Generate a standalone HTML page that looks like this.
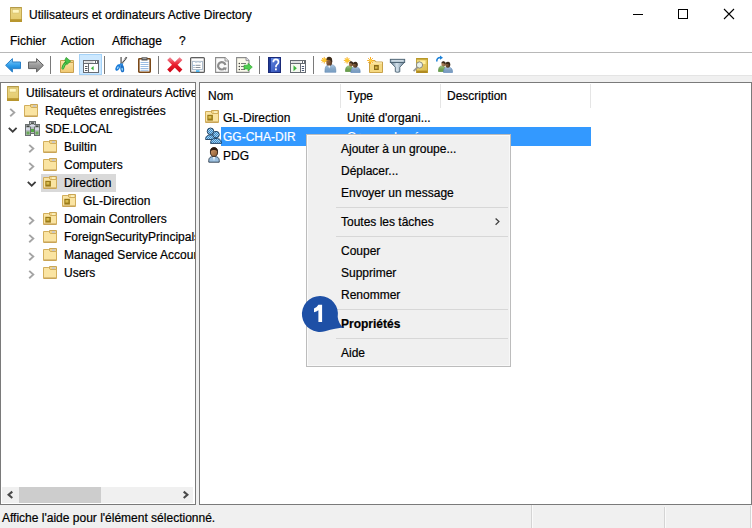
<!DOCTYPE html>
<html><head><meta charset="utf-8">
<style>
*{margin:0;padding:0;box-sizing:border-box}
html,body{width:752px;height:528px;overflow:hidden;background:#f0f0f0;font-family:"Liberation Sans",sans-serif;font-size:12px;color:#000;-webkit-text-stroke:0.2px currentColor}
.a{position:absolute}
.t{position:absolute;line-height:12px;white-space:nowrap}
svg{position:absolute;overflow:visible}
#title{left:0;top:0;width:752px;height:30px;background:#fff}
#menubar{left:0;top:30px;width:752px;height:22px;background:#fff}
#mline{left:0;top:52px;width:752px;height:1px;background:#b8b8b8}
#toolbar{left:0;top:53px;width:752px;height:22px;background:#fff;border-bottom:0}
.clip{position:absolute;overflow:hidden}
.row{position:absolute;height:18px;line-height:18px;white-space:nowrap}
.sep{position:absolute;width:1px;background:#a0a0a0}
.mi{position:absolute;line-height:22px;height:22px;white-space:nowrap}
</style></head><body>
<div id="title" class="a">
  <svg style="left:10px;top:7px" width="12" height="15" viewBox="0 0 12 15">
    <defs><linearGradient id="gb" x1="0" y1="0" x2="0" y2="1"><stop offset="0" stop-color="#ecd98a"/><stop offset="1" stop-color="#e3c96a"/></linearGradient></defs>
    <rect x="0" y="0" width="12" height="15" fill="url(#gb)"/>
    <rect x="0" y="0" width="12" height="1.3" fill="#b39a4a"/>
    <rect x="0" y="0" width="1" height="15" fill="#c4a850"/><rect x="11" y="0" width="1" height="15" fill="#c4a850"/>
    <rect x="2.3" y="2.7" width="6.8" height="3.3" fill="#fff6c0" stroke="#d0b860" stroke-width="0.5"/>
    <rect x="0" y="12.2" width="12" height="2.8" fill="#b8962e"/>
  </svg>
  <div class="t" style="left:29px;top:9px">Utilisateurs et ordinateurs Active Directory</div>
  <div class="a" style="left:633px;top:14px;width:10px;height:1px;background:#000"></div>
  <div class="a" style="left:678px;top:9px;width:10px;height:10px;border:1px solid #000"></div>
  <svg style="left:724px;top:9px" width="10" height="10" viewBox="0 0 10 10"><path d="M0 0L10 10M10 0L0 10" stroke="#000" stroke-width="1.1"/></svg>
</div>
<div id="menubar" class="a">
  <div class="t" style="left:10px;top:5px">Fichier</div>
  <div class="t" style="left:61px;top:5px">Action</div>
  <div class="t" style="left:112px;top:5px">Affichage</div>
  <div class="t" style="left:179px;top:5px">?</div>
</div>
<div id="mline" class="a"></div>

<div id="toolbar" class="a"></div>
<svg style="left:5px;top:58px" width="16" height="15" viewBox="0 0 16 15">
  <defs><linearGradient id="gbl" x1="0" y1="0" x2="0" y2="1"><stop offset="0" stop-color="#8ad4ff"/><stop offset="0.55" stop-color="#2a9ae8"/><stop offset="1" stop-color="#1070c0"/></linearGradient></defs>
  <path d="M0.6 7.3L7.4 0.6V4H15.5V10.6H7.4V14Z" fill="url(#gbl)" stroke="#2a80c8" stroke-width="1" stroke-linejoin="round"/>
</svg>
<svg style="left:28px;top:58px" width="16" height="15" viewBox="0 0 16 15">
  <defs><linearGradient id="ggr" x1="0" y1="0" x2="0" y2="1"><stop offset="0" stop-color="#d0d0d0"/><stop offset="0.5" stop-color="#9a9a9a"/><stop offset="1" stop-color="#808080"/></linearGradient></defs>
  <path d="M15.4 7.3L8.6 0.6V4H0.5V10.6H8.6V14Z" fill="url(#ggr)" stroke="#5e5e5e" stroke-width="1" stroke-linejoin="round"/>
</svg>
<div class="sep" style="left:50px;top:56px;height:18px;background:#7a7a7a"></div>
<svg style="left:60px;top:57px" width="15" height="16" viewBox="0 0 15 16">
  <defs><linearGradient id="gfd" x1="0" y1="0" x2="0" y2="1"><stop offset="0" stop-color="#fbe6a8"/><stop offset="1" stop-color="#f0c870"/></linearGradient></defs>
  <path d="M7.5 3.5H13.5V6H7.5Z" fill="#f2d488" stroke="#caa656"/>
  <path d="M0.5 3.5H5.5L7 5.5H13.5V15.5H0.5Z" fill="url(#gfd)" stroke="#c9a050"/>
  <path d="M2.8 11.3C3.3 8.5 4.8 6.5 6.8 5.2" fill="none" stroke="#2a9a2a" stroke-width="2.6" stroke-linecap="round"/>
  <path d="M2.8 11.3C3.3 8.5 4.8 6.5 6.8 5.2" fill="none" stroke="#5ad05a" stroke-width="1.2" stroke-linecap="round"/>
  <path d="M4.8 3.2L6.2 0.4L10.6 4.2L6.8 7.6Z" fill="#48c048" stroke="#2a9a2a" stroke-width="0.7"/>
</svg>
<div class="a" style="left:79px;top:54px;width:23px;height:21px;background:#cce8ff;border:1px solid #a4d2f8"></div>
<svg style="left:83px;top:60px" width="16" height="13" viewBox="0 0 16 13">
  <rect x="0.5" y="0.5" width="15" height="12" fill="#fff" stroke="#666b72"/>
  <path d="M1 3.5h14" stroke="#666b72"/>
  <path d="M1.5 2h9" stroke="#b8bcc0"/>
  <rect x="12" y="1" width="1" height="2" fill="#666b72"/><rect x="14" y="1" width="1" height="2" fill="#666b72"/>
  <path d="M2 6.5h2.5M2 8.5h2.5M2 10.5h2.5" stroke="#555a60"/>
  <path d="M5.5 4v8.5" stroke="#666b72"/>
  <path d="M10.6 6v4.6L7.9 8.3z" fill="#3cb43c"/>
</svg>
<div class="sep" style="left:104px;top:56px;height:18px;background:#7a7a7a"></div>
<svg style="left:112px;top:54px" width="20" height="22" viewBox="0 0 20 22">
  <path d="M9.1 3L9.1 10" stroke="#7a7a7a" stroke-width="1.6"/>
  <path d="M14.6 3.3L10 9.6" stroke="#3a3a3a" stroke-width="1.7" stroke-dasharray="1.1 0.5"/>
  <ellipse cx="5.8" cy="13.5" rx="1.9" ry="3.6" transform="rotate(28 5.8 13.5)" fill="#1a7ad8"/>
  <ellipse cx="5.8" cy="13.7" rx="0.7" ry="1.5" transform="rotate(28 5.8 13.7)" fill="#9ad8ff"/>
  <ellipse cx="10.2" cy="14.4" rx="1.9" ry="3.9" transform="rotate(-8 10.2 14.4)" fill="#1a70c8"/>
  <ellipse cx="10.2" cy="15.2" rx="0.7" ry="1.5" transform="rotate(-8 10.2 15.2)" fill="#a0e0ff"/>
  <path d="M9.3 9.5L7.5 11.5M10.2 9.5L10.2 11.5" stroke="#2a88e0" stroke-width="1.6"/>
</svg>
<svg style="left:138px;top:57px" width="13" height="16" viewBox="0 0 13 16">
  <rect x="0.8" y="1.8" width="11.4" height="13.4" rx="0.6" fill="#fff" stroke="#7a4818" stroke-width="1.6"/>
  <path d="M2.5 5.5h8M2.5 7.5h8M2.5 9.5h8M2.5 11.5h8M2.5 13.3h8" stroke="#8fb4e0" stroke-width="0.9"/>
  <rect x="3.5" y="0.3" width="6" height="3.2" fill="#505050"/>
  <rect x="4.5" y="1" width="4" height="1.2" fill="#a0a0a0"/>
</svg>
<div class="sep" style="left:158px;top:56px;height:18px;background:#7a7a7a"></div>
<svg style="left:167px;top:57px" width="16" height="16" viewBox="0 0 16 16">
  <defs><linearGradient id="grd" x1="0" y1="0" x2="0" y2="1"><stop offset="0" stop-color="#f07a88"/><stop offset="0.45" stop-color="#ec2030"/><stop offset="1" stop-color="#d00818"/></linearGradient></defs>
  <path d="M1.6 1.6L14 14M14 1.6L1.6 14" stroke="url(#grd)" stroke-width="4" stroke-linecap="butt"/>
</svg>
<svg style="left:190px;top:57px" width="15" height="16" viewBox="0 0 15 16">
  <rect x="0.6" y="0.6" width="13.8" height="14.8" rx="1" fill="#f2f2f2" stroke="#5e5e5e" stroke-width="1.2"/>
  <rect x="2" y="2" width="11" height="1.2" fill="#fff"/>
  <rect x="2.5" y="4.5" width="10" height="8" fill="#fff" stroke="#a8b8c8" stroke-width="0.9"/>
  <rect x="5" y="4.5" width="2.5" height="1.5" fill="#c8d4e0"/><rect x="8.5" y="4.5" width="2.5" height="1.5" fill="#c8d4e0"/>
  <circle cx="4" cy="8.3" r="0.6" fill="#2a6ab0"/><circle cx="4" cy="10.5" r="0.6" fill="#6a7a8a"/>
  <path d="M5.5 8.3h5M5.5 10.5h5" stroke="#7a8490" stroke-width="0.9"/>
  <rect x="6" y="13.3" width="3.5" height="1.6" fill="#3ab0f0"/>
</svg>
<svg style="left:215px;top:57px" width="14" height="16" viewBox="0 0 14 16">
  <path d="M0.6 0.6h9.4l3.4 3.4v11.4h-12.8z" fill="#fafafa" stroke="#8a8a8a" stroke-width="1.1"/>
  <path d="M10 0.6v3.4h3.4" fill="#e8e8e8" stroke="#8a8a8a" stroke-width="0.9"/>
  <path d="M9.6 11.2A3.7 3.7 0 1 1 10.4 8" fill="none" stroke="#8c8c8c" stroke-width="2.2"/>
  <path d="M8.2 10.2l3.6 0.2l-1 3.4z" fill="#8c8c8c"/>
</svg>
<svg style="left:236px;top:57px" width="17" height="16" viewBox="0 0 17 16">
  <path d="M0.6 0.6h9.4l3 3v11.8h-12.4z" fill="#fbfaec" stroke="#8a8a8a" stroke-width="1.1"/>
  <path d="M10 0.6v3h3" fill="#e0e0f0" stroke="#8a8a8a" stroke-width="0.9"/>
  <circle cx="3.3" cy="6.5" r="0.7" fill="#333"/><circle cx="3.3" cy="9.5" r="0.7" fill="#333"/><circle cx="3.3" cy="12.5" r="0.7" fill="#333"/>
  <path d="M5 6.5h5M5 9.5h4M5 12.5h4" stroke="#6a6a6a" stroke-width="0.9"/>
  <path d="M8 8.2h4V6.3l4.3 3.8l-4.3 3.8v-1.9H8z" fill="#50d050" stroke="#2aa02a" stroke-width="0.6"/>
</svg>
<div class="sep" style="left:259px;top:56px;height:18px;background:#7a7a7a"></div>
<svg style="left:268px;top:57px" width="13" height="16" viewBox="0 0 13 16">
  <defs><linearGradient id="ghp" x1="0" y1="0" x2="1" y2="1"><stop offset="0" stop-color="#6a90e8"/><stop offset="1" stop-color="#2a48b0"/></linearGradient></defs>
  <rect x="0.5" y="0.5" width="12" height="15" fill="url(#ghp)" stroke="#1a2a78"/>
  <rect x="1" y="1" width="2" height="14" fill="#1e3a98"/>
  <path d="M5.3 5.2Q5.3 2.4 7.9 2.4Q10.5 2.4 10.5 5Q10.5 6.6 8.9 7.6Q7.9 8.3 7.9 10.2" fill="none" stroke="#fff" stroke-width="1.7"/>
  <rect x="7" y="11.4" width="1.8" height="1.9" fill="#fff"/>
</svg>
<svg style="left:290px;top:60px" width="16" height="13" viewBox="0 0 16 13">
  <rect x="0.5" y="0.5" width="15" height="12" fill="#fff" stroke="#666b72"/>
  <path d="M1 3.5h14" stroke="#666b72"/>
  <path d="M1.5 2h9" stroke="#b8bcc0"/>
  <rect x="12" y="1" width="1" height="2" fill="#666b72"/><rect x="14" y="1" width="1" height="2" fill="#666b72"/>
  <rect x="1" y="4" width="9.5" height="8" fill="#f4f8f0"/>
  <path d="M11.8 6.5h2.3M11.8 8.5h2.3M11.8 10.5h2.3" stroke="#4a5a78"/>
  <path d="M10.5 4v8.5" stroke="#666b72"/>
  <path d="M3.5 5.2v6L6.8 8.2z" fill="#3cb43c"/>
</svg>
<div class="sep" style="left:313px;top:56px;height:18px;background:#7a7a7a"></div>
<svg style="left:318px;top:54px" width="22" height="22" viewBox="0 0 22 22">
<defs><linearGradient id="sku1" x1="0" y1="0" x2="1" y2="1"><stop offset="0" stop-color="#b88050"/><stop offset="1" stop-color="#4a3020"/></linearGradient><linearGradient id="bdu1" x1="0" y1="0" x2="0" y2="1"><stop offset="0" stop-color="#ffffff" stop-opacity="0.35"/><stop offset="1" stop-color="#000" stop-opacity="0.08"/></linearGradient></defs>
<path d="M6.9 18.3C6.9 11.8 8.4 10.8 12.399999999999999 10.8S17.9 11.8 17.9 18.3Z" fill="#8ab4dc" stroke="#6a90b8" stroke-width="0.6"/>
<path d="M6.9 18.3C6.9 11.8 8.4 10.8 12.399999999999999 10.8S17.9 11.8 17.9 18.3Z" fill="url(#bdu1)"/>
<ellipse cx="11.2" cy="7.5" rx="3" ry="4.6" fill="url(#sku1)"/>
<path d="M8.2 7.0A3 4.6 0 0 1 14.2 7.5L13.899999999999999 9.0C13.2 6.5 11.2 4.7 8.399999999999999 6.7Z" fill="#3a2a1a"/>
<path d="M10.2 11.5h2l-1 3z" fill="#fff"/>
<g stroke="#f4a818" stroke-width="0.9"><path d="M6.25 2.95v6.6M2.95 6.25h6.6M3.95 3.95l4.6 4.6M8.55 3.95l-4.6 4.6"/></g><circle cx="6.25" cy="6.25" r="2" fill="#ffc830"/>
</svg>
<svg style="left:343px;top:54px" width="20" height="22" viewBox="0 0 20 22">
<defs><linearGradient id="skg1" x1="0" y1="0" x2="1" y2="1"><stop offset="0" stop-color="#c09060"/><stop offset="1" stop-color="#6a4a28"/></linearGradient><linearGradient id="bdg1" x1="0" y1="0" x2="0" y2="1"><stop offset="0" stop-color="#ffffff" stop-opacity="0.35"/><stop offset="1" stop-color="#000" stop-opacity="0.08"/></linearGradient></defs>
<path d="M2.5 17.5C2.5 13 4.0 12 6.25 12S10 13 10 17.5Z" fill="#74b050" stroke="#4a8a30" stroke-width="0.6"/>
<path d="M2.5 17.5C2.5 13 4.0 12 6.25 12S10 13 10 17.5Z" fill="url(#bdg1)"/>
<ellipse cx="8" cy="10" rx="2.2" ry="2.6" fill="url(#skg1)"/>
<path d="M5.8 9.5A2.2 2.6 0 0 1 10.2 10L9.899999999999999 11.5C9.2 9 8 9.200000000000001 6.0 9.2Z" fill="#3a2a1a"/>
<defs><linearGradient id="skg2" x1="0" y1="0" x2="1" y2="1"><stop offset="0" stop-color="#a07048"/><stop offset="1" stop-color="#3a2818"/></linearGradient><linearGradient id="bdg2" x1="0" y1="0" x2="0" y2="1"><stop offset="0" stop-color="#ffffff" stop-opacity="0.35"/><stop offset="1" stop-color="#000" stop-opacity="0.08"/></linearGradient></defs>
<path d="M7.8 18.5C7.8 14.3 9.3 13.3 12.5 13.3S17.2 14.3 17.2 18.5Z" fill="#86aed8" stroke="#5a86b8" stroke-width="0.6"/>
<path d="M7.8 18.5C7.8 14.3 9.3 13.3 12.5 13.3S17.2 14.3 17.2 18.5Z" fill="url(#bdg2)"/>
<ellipse cx="12.2" cy="10.8" rx="2.4" ry="2.9" fill="url(#skg2)"/>
<path d="M9.799999999999999 10.3A2.4 2.9 0 0 1 14.6 10.8L14.299999999999999 12.3C13.6 9.8 12.2 9.700000000000001 9.999999999999998 10.0Z" fill="#3a2a1a"/>
<g stroke="#f4a818" stroke-width="0.9"><path d="M4.1 3.1000000000000005v6.6M0.7999999999999998 6.4h6.6M1.7999999999999998 4.1000000000000005l4.6 4.6M6.3999999999999995 4.1000000000000005l-4.6 4.6"/></g><circle cx="4.1" cy="6.4" r="2" fill="#ffc830"/>
</svg>
<svg style="left:367px;top:56px" width="17" height="17" viewBox="0 0 17 17">
  <path d="M2.5 4.5H8L9 6H15.5V16.5H2.5Z" fill="#f5d880" stroke="#c9a24a"/>
  <path d="M3 7h12" stroke="#fff0c0"/>
  <rect x="7" y="9" width="4.8" height="5" fill="#8a6a18"/>
  <rect x="8" y="10.5" width="2.5" height="2.2" fill="#d8b848"/>
  <g stroke="#f8a820" stroke-width="1"><path d="M3.5 1v7M0.2 4.5h6.6M1.2 2.2l4.6 4.6M5.8 2.2L1.2 6.8"/></g>
  <circle cx="3.5" cy="4.5" r="1.6" fill="#ffcf40"/>
</svg>
<svg style="left:389px;top:58px" width="17" height="16" viewBox="0 0 17 16">
  <defs><linearGradient id="gfl" x1="0" y1="0" x2="1" y2="0"><stop offset="0" stop-color="#5a7488"/><stop offset="0.45" stop-color="#d4e2ec"/><stop offset="1" stop-color="#6a8498"/></linearGradient></defs>
  <path d="M1.5 4.3L6.3 9.2V13.8Q8.4 14.8 10.8 13.8V9.2L15.5 4.3Z" fill="url(#gfl)" stroke="#4a6070" stroke-width="0.9"/>
  <rect x="1.3" y="1.3" width="14.4" height="3.2" fill="#9ab0c0" stroke="#4a6070" stroke-width="0.9"/>
  <path d="M2.5 2.9h12" stroke="#eef4f8" stroke-width="1"/>
</svg>
<svg style="left:412px;top:57px" width="17" height="17" viewBox="0 0 17 17">
  <defs><linearGradient id="gfn" x1="0" y1="0" x2="1" y2="1"><stop offset="0" stop-color="#f2dc80"/><stop offset="1" stop-color="#d8b848"/></linearGradient></defs>
  <rect x="4" y="1" width="12" height="15" fill="url(#gfn)"/>
  <rect x="4" y="1" width="12" height="1.6" fill="#b89828"/>
  <rect x="4" y="13.6" width="12" height="2.4" fill="#b08a20"/>
  <rect x="4" y="1" width="0.9" height="15" fill="#c0a030"/><rect x="15.1" y="1" width="0.9" height="15" fill="#c0a030"/>
  <rect x="8" y="3.5" width="5.5" height="3.5" fill="#fff0a0"/>
  <path d="M5.6 10.2L1.6 14.2" stroke="#9a9a9a" stroke-width="1.8"/>
  <circle cx="7.5" cy="8" r="3.1" fill="#e8f0e8" stroke="#8a8a80" stroke-width="1"/>
</svg>
<svg style="left:435px;top:54px" width="20" height="22" viewBox="0 0 20 22">
<defs><linearGradient id="ska1" x1="0" y1="0" x2="1" y2="1"><stop offset="0" stop-color="#d0a070"/><stop offset="1" stop-color="#7a5a38"/></linearGradient><linearGradient id="bda1" x1="0" y1="0" x2="0" y2="1"><stop offset="0" stop-color="#ffffff" stop-opacity="0.35"/><stop offset="1" stop-color="#000" stop-opacity="0.08"/></linearGradient></defs>
<path d="M3.5 17.5C3.5 13 5.0 12 7.0 12S10.5 13 10.5 17.5Z" fill="#74b050" stroke="#4a8a30" stroke-width="0.6"/>
<path d="M3.5 17.5C3.5 13 5.0 12 7.0 12S10.5 13 10.5 17.5Z" fill="url(#bda1)"/>
<ellipse cx="8.5" cy="10" rx="2.2" ry="2.6" fill="url(#ska1)"/>
<path d="M6.3 9.5A2.2 2.6 0 0 1 10.7 10L10.399999999999999 11.5C9.7 9 8.5 9.200000000000001 6.5 9.2Z" fill="#3a2a1a"/>
<defs><linearGradient id="ska2" x1="0" y1="0" x2="1" y2="1"><stop offset="0" stop-color="#a07048"/><stop offset="1" stop-color="#3a2818"/></linearGradient><linearGradient id="bda2" x1="0" y1="0" x2="0" y2="1"><stop offset="0" stop-color="#ffffff" stop-opacity="0.35"/><stop offset="1" stop-color="#000" stop-opacity="0.08"/></linearGradient></defs>
<path d="M8.5 18.5C8.5 14.3 10.0 13.3 13.0 13.3S17.5 14.3 17.5 18.5Z" fill="#86aed8" stroke="#5a86b8" stroke-width="0.6"/>
<path d="M8.5 18.5C8.5 14.3 10.0 13.3 13.0 13.3S17.5 14.3 17.5 18.5Z" fill="url(#bda2)"/>
<ellipse cx="12.8" cy="10.8" rx="2.4" ry="2.9" fill="url(#ska2)"/>
<path d="M10.4 10.3A2.4 2.9 0 0 1 15.200000000000001 10.8L14.9 12.3C14.200000000000001 9.8 12.8 9.700000000000001 10.6 10.0Z" fill="#3a2a1a"/>
<path d="M1.8 7.5C1.6 5 3 3.5 5.5 3.5" fill="none" stroke="#1a80d8" stroke-width="1.5"/>
<path d="M5 1.5l3 2.2l-3 2z" fill="#1a80d8"/>
</svg>


<div class="a" style="left:0;top:75px;width:752px;height:1px;background:#e4e4e4"></div>
<div class="a" style="left:0;top:82px;width:196px;height:423px;background:#fff;border:1px solid #7a7a7a"></div>
<div class="clip" style="left:1px;top:83px;width:194px;height:404px"><div class="a" style="left:-1px;top:-83px;width:752px;height:528px"><svg style="left:7px;top:86px" width="12" height="15" viewBox="0 0 12 15"><defs><linearGradient id="gb2" x1="0" y1="0" x2="0" y2="1"><stop offset="0" stop-color="#ecd98a"/><stop offset="1" stop-color="#e3c96a"/></linearGradient></defs><rect x="0" y="0" width="12" height="15" fill="url(#gb2)"/><rect x="0" y="0" width="12" height="1.3" fill="#b39a4a"/><rect x="0" y="0" width="1" height="15" fill="#c4a850"/><rect x="11" y="0" width="1" height="15" fill="#c4a850"/><rect x="2.3" y="2.7" width="6.8" height="3.3" fill="#fff6c0" stroke="#d0b860" stroke-width="0.5"/><rect x="0" y="12.2" width="12" height="2.8" fill="#b8962e"/></svg>
<div class="row" style="left:26px;top:84px">Utilisateurs et ordinateurs Active Directory</div>
<svg style="left:9px;top:108px" width="7" height="9" viewBox="0 0 7 9"><path d="M1.2 0.9L5.3 4.6L1.2 8.3" fill="none" stroke="#a4a4a4" stroke-width="1.9"/></svg>
<svg style="left:24px;top:104px" width="14" height="13" viewBox="0 0 14 13"><path d="M6.5 0.5H13.5V4H6.5Z" fill="#f2d488" stroke="#caa656"/><rect x="9" y="1.2" width="3" height="2" fill="#c8c8c8"/><path d="M0.5 1.5H5.8L7.3 3.5H13.5V12.5H0.5Z" fill="#fae4a2" stroke="#d2ae5c"/><path d="M1 12h12" stroke="#c09a50"/></svg>
<div class="row" style="left:45px;top:102px">Requêtes enregistrées</div>
<svg style="left:8px;top:127px" width="10" height="6" viewBox="0 0 10 6"><path d="M0.8 0.8L4.7 4.7L8.6 0.8" fill="none" stroke="#3c3c3c" stroke-width="1.75"/></svg>
<svg style="left:25px;top:121px" width="15" height="15" viewBox="0 0 15 15">
<rect x="4.5" y="0.5" width="6" height="12" fill="#b4bcbc" stroke="#6a7070"/>
<rect x="0.5" y="3.5" width="5" height="11" fill="#b4bcbc" stroke="#6a7070"/>
<rect x="9.5" y="3.5" width="5" height="11" fill="#b4bcbc" stroke="#6a7070"/>
<rect x="6" y="1.5" width="3" height="1.2" fill="#2a2a2a"/><rect x="1.5" y="4.6" width="3" height="1.2" fill="#2a2a2a"/><rect x="10.5" y="4.6" width="3" height="1.2" fill="#2a2a2a"/>
<rect x="1" y="7.2" width="4" height="1.6" fill="#dcdcf0"/><rect x="10" y="7.2" width="4" height="1.6" fill="#dcdcf0"/><rect x="5" y="4" width="5" height="1.5" fill="#dcdcf0"/>
<rect x="1.5" y="10.5" width="3" height="3" fill="#6aa858"/><rect x="10.5" y="10.5" width="3" height="3" fill="#6aa858"/><rect x="6" y="8" width="3" height="3" fill="#50a840"/>
</svg>
<div class="row" style="left:45px;top:120px">SDE.LOCAL</div>
<svg style="left:28px;top:144px" width="7" height="9" viewBox="0 0 7 9"><path d="M1.2 0.9L5.3 4.6L1.2 8.3" fill="none" stroke="#a4a4a4" stroke-width="1.9"/></svg>
<svg style="left:43px;top:140px" width="14" height="13" viewBox="0 0 14 13"><path d="M6.5 0.5H13.5V4H6.5Z" fill="#f2d488" stroke="#caa656"/><rect x="9" y="1.2" width="3" height="2" fill="#c8c8c8"/><path d="M0.5 1.5H5.8L7.3 3.5H13.5V12.5H0.5Z" fill="#fae4a2" stroke="#d2ae5c"/><path d="M1 12h12" stroke="#c09a50"/></svg>
<div class="row" style="left:64px;top:138px">Builtin</div>
<svg style="left:28px;top:162px" width="7" height="9" viewBox="0 0 7 9"><path d="M1.2 0.9L5.3 4.6L1.2 8.3" fill="none" stroke="#a4a4a4" stroke-width="1.9"/></svg>
<svg style="left:43px;top:158px" width="14" height="13" viewBox="0 0 14 13"><path d="M6.5 0.5H13.5V4H6.5Z" fill="#f2d488" stroke="#caa656"/><rect x="9" y="1.2" width="3" height="2" fill="#c8c8c8"/><path d="M0.5 1.5H5.8L7.3 3.5H13.5V12.5H0.5Z" fill="#fae4a2" stroke="#d2ae5c"/><path d="M1 12h12" stroke="#c09a50"/></svg>
<div class="row" style="left:64px;top:156px">Computers</div>
<div class="a" style="left:41px;top:174px;width:75px;height:18px;background:#d9d9d9"></div>
<svg style="left:27px;top:181px" width="10" height="6" viewBox="0 0 10 6"><path d="M0.8 0.8L4.7 4.7L8.6 0.8" fill="none" stroke="#3c3c3c" stroke-width="1.75"/></svg>
<svg style="left:43px;top:176px" width="14" height="13" viewBox="0 0 14 13"><path d="M6.5 0.5H13.5V4H6.5Z" fill="#f2d488" stroke="#caa656"/><rect x="9" y="1.2" width="3" height="2" fill="#f8f0c0"/><path d="M0.5 1.5H5.8L7.3 3.5H13.5V12.5H0.5Z" fill="#fae4a2" stroke="#d2ae5c"/><path d="M1 12h12" stroke="#c09a50"/><rect x="2.3" y="4.8" width="5.6" height="5.8" fill="#9a7a18"/><rect x="3.4" y="6" width="3" height="2.6" fill="#d8bc50"/></svg>
<div class="row" style="left:64px;top:174px">Direction</div>
<svg style="left:28px;top:216px" width="7" height="9" viewBox="0 0 7 9"><path d="M1.2 0.9L5.3 4.6L1.2 8.3" fill="none" stroke="#a4a4a4" stroke-width="1.9"/></svg>
<svg style="left:43px;top:212px" width="14" height="13" viewBox="0 0 14 13"><path d="M6.5 0.5H13.5V4H6.5Z" fill="#f2d488" stroke="#caa656"/><rect x="9" y="1.2" width="3" height="2" fill="#f8f0c0"/><path d="M0.5 1.5H5.8L7.3 3.5H13.5V12.5H0.5Z" fill="#fae4a2" stroke="#d2ae5c"/><path d="M1 12h12" stroke="#c09a50"/><rect x="2.3" y="4.8" width="5.6" height="5.8" fill="#9a7a18"/><rect x="3.4" y="6" width="3" height="2.6" fill="#d8bc50"/></svg>
<div class="row" style="left:64px;top:210px">Domain Controllers</div>
<svg style="left:28px;top:234px" width="7" height="9" viewBox="0 0 7 9"><path d="M1.2 0.9L5.3 4.6L1.2 8.3" fill="none" stroke="#a4a4a4" stroke-width="1.9"/></svg>
<svg style="left:43px;top:230px" width="14" height="13" viewBox="0 0 14 13"><path d="M6.5 0.5H13.5V4H6.5Z" fill="#f2d488" stroke="#caa656"/><rect x="9" y="1.2" width="3" height="2" fill="#c8c8c8"/><path d="M0.5 1.5H5.8L7.3 3.5H13.5V12.5H0.5Z" fill="#fae4a2" stroke="#d2ae5c"/><path d="M1 12h12" stroke="#c09a50"/></svg>
<div class="row" style="left:64px;top:228px">ForeignSecurityPrincipals</div>
<svg style="left:28px;top:252px" width="7" height="9" viewBox="0 0 7 9"><path d="M1.2 0.9L5.3 4.6L1.2 8.3" fill="none" stroke="#a4a4a4" stroke-width="1.9"/></svg>
<svg style="left:43px;top:248px" width="14" height="13" viewBox="0 0 14 13"><path d="M6.5 0.5H13.5V4H6.5Z" fill="#f2d488" stroke="#caa656"/><rect x="9" y="1.2" width="3" height="2" fill="#c8c8c8"/><path d="M0.5 1.5H5.8L7.3 3.5H13.5V12.5H0.5Z" fill="#fae4a2" stroke="#d2ae5c"/><path d="M1 12h12" stroke="#c09a50"/></svg>
<div class="row" style="left:64px;top:246px">Managed Service Accounts</div>
<svg style="left:28px;top:270px" width="7" height="9" viewBox="0 0 7 9"><path d="M1.2 0.9L5.3 4.6L1.2 8.3" fill="none" stroke="#a4a4a4" stroke-width="1.9"/></svg>
<svg style="left:43px;top:266px" width="14" height="13" viewBox="0 0 14 13"><path d="M6.5 0.5H13.5V4H6.5Z" fill="#f2d488" stroke="#caa656"/><rect x="9" y="1.2" width="3" height="2" fill="#c8c8c8"/><path d="M0.5 1.5H5.8L7.3 3.5H13.5V12.5H0.5Z" fill="#fae4a2" stroke="#d2ae5c"/><path d="M1 12h12" stroke="#c09a50"/></svg>
<div class="row" style="left:64px;top:264px">Users</div>
<svg style="left:62px;top:194px" width="14" height="13" viewBox="0 0 14 13"><path d="M6.5 0.5H13.5V4H6.5Z" fill="#f2d488" stroke="#caa656"/><rect x="9" y="1.2" width="3" height="2" fill="#f8f0c0"/><path d="M0.5 1.5H5.8L7.3 3.5H13.5V12.5H0.5Z" fill="#fae4a2" stroke="#d2ae5c"/><path d="M1 12h12" stroke="#c09a50"/><rect x="2.3" y="4.8" width="5.6" height="5.8" fill="#9a7a18"/><rect x="3.4" y="6" width="3" height="2.6" fill="#d8bc50"/></svg>
<div class="row" style="left:83px;top:192px">GL-Direction</div></div></div>
<div class="a" style="left:2px;top:487px;width:191px;height:16px;background:#f0f0f0"></div>
<div class="a" style="left:19px;top:487px;width:82px;height:16px;background:#cdcdcd"></div>
<svg style="left:7px;top:491px" width="6" height="8" viewBox="0 0 6 8"><path d="M5.3 0.6L1.6 3.8L5.3 7" fill="none" stroke="#4a4a4a" stroke-width="2.1"/></svg>
<svg style="left:183px;top:491px" width="6" height="8" viewBox="0 0 6 8"><path d="M0.7 0.6L4.4 3.8L0.7 7" fill="none" stroke="#4a4a4a" stroke-width="2.1"/></svg>
<div class="a" style="left:199px;top:82px;width:553px;height:423px;background:#fff;border:1px solid #7a7a7a"></div>
<div class="clip" style="left:200px;top:83px;width:551px;height:421px"><div class="a" style="left:-200px;top:-83px;width:752px;height:528px"><div class="row" style="left:208px;top:87px">Nom</div>
<div class="row" style="left:347px;top:87px">Type</div>
<div class="row" style="left:447px;top:87px">Description</div>
<div class="a" style="left:340px;top:84px;width:1px;height:24px;background:#e5e5e5"></div>
<div class="a" style="left:440px;top:84px;width:1px;height:24px;background:#e5e5e5"></div>
<div class="a" style="left:590px;top:84px;width:1px;height:24px;background:#e5e5e5"></div>
<svg style="left:205px;top:110px" width="14" height="13" viewBox="0 0 14 13"><path d="M6.5 0.5H13.5V4H6.5Z" fill="#f2d488" stroke="#caa656"/><rect x="9" y="1.2" width="3" height="2" fill="#f8f0c0"/><path d="M0.5 1.5H5.8L7.3 3.5H13.5V12.5H0.5Z" fill="#fae4a2" stroke="#d2ae5c"/><path d="M1 12h12" stroke="#c09a50"/><rect x="2.3" y="4.8" width="5.6" height="5.8" fill="#9a7a18"/><rect x="3.4" y="6" width="3" height="2.6" fill="#d8bc50"/></svg>
<div class="row" style="left:223px;top:109px">GL-Direction</div>
<div class="row" style="left:347px;top:109px">Unité d'organi...</div>
<div class="a" style="left:221px;top:127px;width:370px;height:19px;background:#3399ff"></div>
<svg style="left:205px;top:127px" width="17" height="17" viewBox="0 0 17 17">
<defs><pattern id="chk" width="2" height="2" patternUnits="userSpaceOnUse"><rect width="2" height="2" fill="#3a88c8"/><rect width="1" height="1" fill="#a8d4f0"/><rect x="1" y="1" width="1" height="1" fill="#a8d4f0"/></pattern></defs>
<path d="M0.6 12.5C0.6 9 2.5 8 5.5 8S10.4 9 10.4 12.5Z" fill="url(#chk)" stroke="#1a3a5a" stroke-width="0.9"/>
<circle cx="5.5" cy="4.3" r="3.3" fill="url(#chk)" stroke="#1a3a5a" stroke-width="0.9"/>
<path d="M5.6 16.4C5.6 12.5 7.5 11.5 11 11.5S16.4 12.5 16.4 16.4Z" fill="url(#chk)" stroke="#1a3a5a" stroke-width="0.9"/>
<circle cx="11" cy="7.6" r="3.3" fill="url(#chk)" stroke="#1a3a5a" stroke-width="0.9"/>
</svg>
<div class="row" style="left:223px;top:128px;color:#fff">GG-CHA-DIR</div>
<div class="row" style="left:347px;top:128px;color:#fff">Groupe de sécu...</div>
<svg style="left:208px;top:147px" width="12" height="16" viewBox="0 0 12 16">
<path d="M0.8 15.2C0.3 10.5 2.5 9.5 6 9.5S11.7 10.5 11.2 15.2Z" fill="#9cc0e0" stroke="#2a3a4a" stroke-width="0.9"/>
<path d="M5 9.5L6 14L7 9.5Z" fill="#fff"/>
<defs><linearGradient id="skn" x1="0" y1="0" x2="1" y2="1"><stop offset="0" stop-color="#d8a070"/><stop offset="1" stop-color="#8a5a30"/></linearGradient></defs><ellipse cx="6" cy="5" rx="3.6" ry="4.4" fill="url(#skn)" stroke="#2a1a10" stroke-width="0.9"/>
<path d="M2.4 4.5C2.4 1 4 0.4 6 0.4S9.6 1 9.6 4.5C8.5 2.5 3.5 2.5 2.4 4.5Z" fill="#2a1a10"/>
</svg>
<div class="row" style="left:223px;top:147px">PDG</div></div></div>
<div class="a" style="left:306px;top:134px;width:205px;height:233px;background:#f0f0f0;border:1px solid #bcbcbc;box-shadow:inset 1px 1px 0 #fafafa, inset -1px -1px 0 #f8f8f8"></div>
<div class="mi" style="left:341px;top:138px">Ajouter à un groupe...</div>
<div class="mi" style="left:341px;top:160px">Déplacer...</div>
<div class="mi" style="left:341px;top:182px">Envoyer un message</div>
<div class="a" style="left:336px;top:207px;width:172px;height:1px;background:#d7d7d7"></div>
<div class="mi" style="left:341px;top:211px">Toutes les tâches</div>
<svg style="left:495px;top:218px" width="5" height="8" viewBox="0 0 5 8"><path d="M0.6 0.5L3.9 3.6L0.6 6.7" fill="none" stroke="#404040" stroke-width="1.3"/></svg>
<div class="a" style="left:336px;top:236px;width:172px;height:1px;background:#d7d7d7"></div>
<div class="mi" style="left:341px;top:240px">Couper</div>
<div class="mi" style="left:341px;top:262px">Supprimer</div>
<div class="mi" style="left:341px;top:284px">Renommer</div>
<div class="a" style="left:336px;top:309px;width:172px;height:1px;background:#d7d7d7"></div>
<div class="mi" style="left:341px;top:313px;font-weight:bold">Propriétés</div>
<div class="a" style="left:336px;top:338px;width:172px;height:1px;background:#d7d7d7"></div>
<div class="mi" style="left:341px;top:342px">Aide</div>
<svg style="left:300px;top:294px" width="46" height="40" viewBox="0 0 46 40"><path d="M37.7 23Q38.5 30 43.5 33.5Q36 34 25 37.3A18 18 0 1 1 37.7 23Z" fill="#1e50a6"/></svg>
<svg style="left:0;top:0" width="752" height="528" viewBox="0 0 752 528"><path d="M318.4 304.8H322.1V322H318.4V310.2Q316.4 311.6 314 312.2V308.6Q317 307.4 318.4 304.8Z" fill="#fff"/></svg>
<div class="t" style="left:2px;top:512px">Affiche l'aide pour l'élément sélectionné.</div>
<div class="a" style="left:532px;top:505px;width:1px;height:23px;background:#fafafa"></div>
<div class="a" style="left:531px;top:505px;width:1px;height:23px;background:#d4d4d4"></div>
<div class="a" style="left:665px;top:507px;width:1px;height:21px;background:#fafafa"></div>
<div class="a" style="left:664px;top:507px;width:1px;height:21px;background:#d4d4d4"></div>
<div class="a" style="left:751px;top:506px;width:1px;height:22px;background:#fafafa"></div>
<div class="a" style="left:750px;top:506px;width:1px;height:22px;background:#d4d4d4"></div>
</body></html>
